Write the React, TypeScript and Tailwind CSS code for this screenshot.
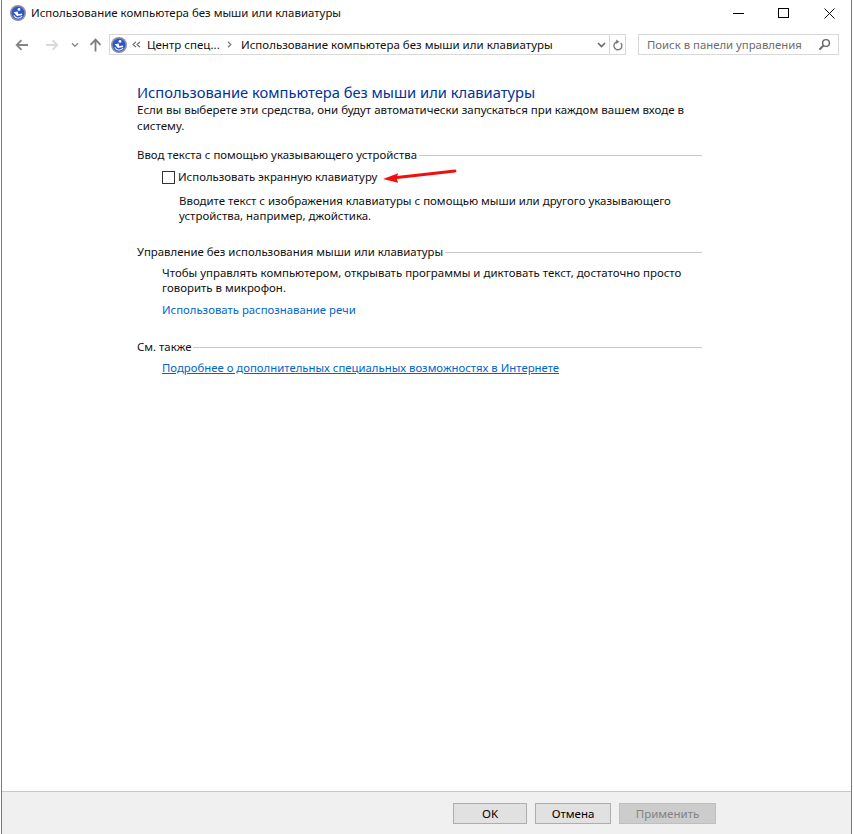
import React from "react";

const font = { fontFamily: '"Noto Sans", sans-serif' };

function EaseIcon({ size = 16 }: { size?: number }) {
  return (
    <svg width={size} height={size} viewBox="0 0 16 16" className="shrink-0">
      <circle cx="8" cy="8" r="8" fill="#8b91a0" />
      <circle cx="8" cy="8" r="6.4" fill="#2e56cc" />
      <circle cx="9" cy="4.4" r="1.4" fill="#fff" />
      <path d="M3.6 7.2 L7.6 6.6 L8.4 9.2 L11.8 8.6 L12.4 10 L7 11 Z" fill="#fff" />
      <path d="M3.8 10.2 A4.8 4.8 0 0 0 12 11.2" stroke="#e4eafc" strokeWidth="1.1" fill="none" />
    </svg>
  );
}

function SectionHead({ title }: { title: string }) {
  return (
    <div className="flex items-center w-[565px] h-[16px]">
      <span className="text-[11.4px] leading-[16px] text-[#111] whitespace-nowrap">{title}</span>
      <div className="flex-1 h-px bg-[#c8c8c8] ml-[2px]" />
    </div>
  );
}

function Button({ w, label, disabled, ml }: { w: string; label: string; disabled?: boolean; ml?: string }) {
  return (
    <div
      className={`${w} ${ml ?? ""} h-[21px] flex items-center justify-center border text-[11.5px] ${
        disabled ? "bg-[#cccccc] border-[#bfbfbf] text-[#838383]" : "bg-[#e1e1e1] border-[#adadad] text-black"
      }`}
    >
      {label}
    </div>
  );
}

export default function App() {
  return (
    <div className="relative w-[854px] h-[834px] bg-white overflow-hidden" style={font}>
      <div className="ml-[1px] mr-[2px] h-full border-x border-l-[#3f9a67] border-r-[#3f9a67] flex flex-col">
        {/* title bar */}
        <div className="h-[30px] flex items-center shrink-0">
          <div className="ml-[8px] mb-[4px]"><EaseIcon /></div>
          <span className="ml-[5px] mb-[4px] text-[11.45px] text-[#111] whitespace-nowrap">
            Использование компьютера без мыши или клавиатуры
          </span>
          <div className="ml-auto flex items-center mb-[4px]">
            <div className="w-[11px] h-px bg-black" />
            <div className="ml-[34px] w-[11px] h-[10px] border border-black" />
            <svg width="11" height="11" viewBox="0 0 11 11" className="ml-[35px] mr-[16px]">
              <path d="M0.5 0.5 L10.5 10.5 M10.5 0.5 L0.5 10.5" stroke="#111" strokeWidth="1" />
            </svg>
          </div>
        </div>
        {/* nav */}
        <div className="h-[21px] mt-[4px] flex items-center shrink-0">
          <svg width="14" height="12" viewBox="0 0 14 12" className="ml-[13px]">
            <path d="M13 6 H2 M6.5 1.2 L1.7 6 L6.5 10.8" stroke="#858585" strokeWidth="1.8" fill="none" />
          </svg>
          <svg width="14" height="12" viewBox="0 0 14 12" className="ml-[16px]">
            <path d="M1 6 H12 M7.5 1.2 L12.3 6 L7.5 10.8" stroke="#d9d9d9" strokeWidth="1.8" fill="none" />
          </svg>
          <svg width="8" height="6" viewBox="0 0 8 6" className="ml-[12px]">
            <path d="M1 1.2 L4 4.2 L7 1.2" stroke="#8a8a8a" strokeWidth="1.4" fill="none" />
          </svg>
          <svg width="13" height="14" viewBox="0 0 13 14" className="ml-[10px]">
            <path d="M6.5 13.5 V2 M1.5 6.8 L6.5 1.6 L11.5 6.8" stroke="#7d7d7d" strokeWidth="1.8" fill="none" />
          </svg>
          <div className="ml-[7px] w-[517px] h-[21px] border border-[#d9d9d9] flex items-center">
            <div className="ml-[1px]"><EaseIcon /></div>
            <svg width="9" height="7" viewBox="0 0 9 7" className="ml-[5px]">
              <path d="M4 0.8 L1 3.5 L4 6.2 M8 0.8 L5 3.5 L8 6.2" stroke="#666" strokeWidth="1.1" fill="none" />
            </svg>
            <span className="ml-[6px] w-[80px] text-[11.5px] text-[#111] whitespace-nowrap">Центр спец...</span>
            <svg width="5" height="7" viewBox="0 0 5 7">
              <path d="M1 0.8 L3.8 3.5 L1 6.2" stroke="#777" strokeWidth="1.2" fill="none" />
            </svg>
            <span className="ml-[9px] text-[11.5px] text-[#111] whitespace-nowrap">
              Использование компьютера без мыши или клавиатуры
            </span>
            <svg width="9" height="6" viewBox="0 0 9 6" className="ml-auto mr-[3px]">
              <path d="M1 1 L4.5 4.5 L8 1" stroke="#666" strokeWidth="1.6" fill="none" />
            </svg>
            <div className="w-[16px] h-full border-l border-[#d9d9d9] flex items-center justify-center">
              <svg width="11" height="12" viewBox="0 0 11 12">
                <path d="M8.8 4 A4 4 0 1 1 5.5 2.8" stroke="#7a7a7a" strokeWidth="1.4" fill="none" />
                <path d="M4.2 0.4 L7.4 2.8 L4.2 5 Z" fill="#7a7a7a" />
              </svg>
            </div>
          </div>
          <div className="ml-[12px] w-[201px] h-[21px] border border-[#d9d9d9] flex items-center">
            <span className="ml-[8px] text-[11.35px] text-[#6d6d6d] whitespace-nowrap">Поиск в панели управления</span>
            <svg width="13" height="13" viewBox="0 0 13 13" className="ml-auto mr-[7px]">
              <circle cx="8" cy="5" r="3.4" stroke="#666" strokeWidth="1.4" fill="none" />
              <path d="M5.4 7.6 L1.4 11.6" stroke="#666" strokeWidth="2" />
            </svg>
          </div>
        </div>
        {/* content */}
        <div className="flex-1 pl-[135px] pt-[28px]">
          <h1 className="text-[14.7px] leading-[19px] text-[#003399] whitespace-nowrap">
            Использование компьютера без мыши или клавиатуры
          </h1>
          <p className="w-[565px] text-[11.5px] leading-[16px] text-[#111]">
            Если вы выберете эти средства, они будут автоматически запускаться при каждом вашем входе в систему.
          </p>
          <div className="mt-[13px]">
            <SectionHead title="Ввод текста с помощью указывающего устройства" />
          </div>
          <div className="flex items-center pl-[25px] mt-[6px] h-[16px]">
            <div className="w-[13px] h-[13px] border border-[#333] bg-white" />
            <span className="ml-[3px] text-[11.4px] text-[#111] whitespace-nowrap">Использовать экранную клавиатуру</span>
          </div>
          <p className="ml-[42px] w-[515px] text-[11.45px] leading-[15px] text-[#111] mt-[8px]">
            Вводите текст с изображения клавиатуры с помощью мыши или другого указывающего устройства, например, джойстика.
          </p>
          <div className="mt-[21px]">
            <SectionHead title="Управление без использования мыши или клавиатуры" />
          </div>
          <p className="ml-[25px] w-[535px] text-[11.45px] leading-[15px] text-[#111] mt-[5px]">
            Чтобы управлять компьютером, открывать программы и диктовать текст, достаточно просто говорить в микрофон.
          </p>
          <div className="ml-[25px] mt-[7px] text-[11.35px] leading-[16px] text-[#0066cc]">Использовать распознавание речи</div>
          <div className="mt-[21px]">
            <SectionHead title="См. также" />
          </div>
          <div className="ml-[25px] mt-[5px] text-[11.35px] leading-[16px] text-[#0066cc] underline">
            Подробнее о дополнительных специальных возможностях в Интернете
          </div>
        </div>
        {/* footer */}
        <div className="h-[43px] shrink-0 bg-[#f0f0f0] border-t border-[#c8c8c8] flex items-center pl-[451px] pt-[1px]">
          <Button w="w-[74px]" label="OK" />
          <Button w="w-[76px]" label="Отмена" ml="ml-[8px]" />
          <Button w="w-[97px]" label="Применить" disabled ml="ml-[8px]" />
        </div>
      </div>
      {/* red annotation arrow */}
      <svg className="absolute left-[380px] top-[165px]" width="80" height="20" viewBox="0 0 80 20">
        <path d="M17 12.5 L75 6" stroke="#f01010" strokeWidth="2.8" strokeLinecap="round" />
        <path d="M3 14 L18.3 8.3 L16.5 12.5 L18 17.7 Z" fill="#f01010" />
      </svg>
    </div>
  );
}
